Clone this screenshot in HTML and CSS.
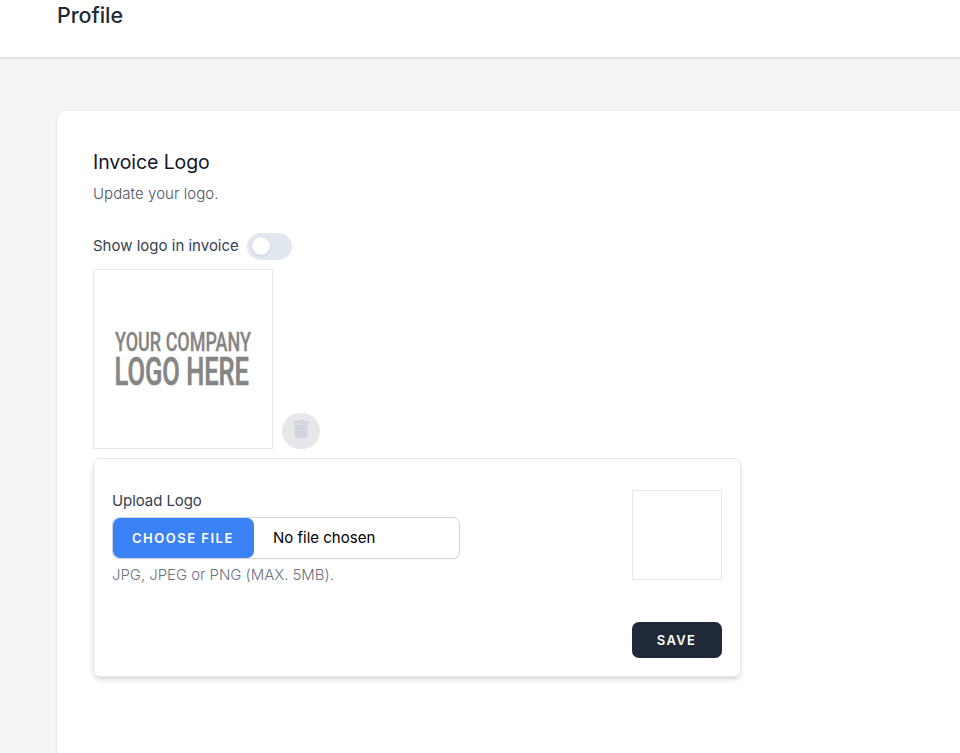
FILE: index.html
```html
<!DOCTYPE html>
<html lang="en">
<head>
<meta charset="utf-8">
<title>Profile</title>
<link rel="stylesheet" href="styles.css">
</head>
<body>
<header class="header"><h1 class="page-title"><span>Profile</span></h1></header>
<main class="panel">
  <h2 class="title"><span>Invoice Logo</span></h2>
  <p class="subtitle"><span>Update your logo.</span></p>
  <div class="toggle-row">
    <span class="toggle-label">Show logo in invoice</span>
    <span class="switch" role="switch" aria-checked="false"><span class="knob"></span></span>
  </div>
  <div class="logo-row">
    <div class="logo-box">
      <svg width="178" height="178" viewBox="94 270 178 178">
        <g class="logo-text">
          <text class="logo-small" x="115" y="351" textLength="136" lengthAdjust="spacingAndGlyphs">YOUR COMPANY</text>
          <text class="logo-large" x="114.5" y="384.5" textLength="134.5" lengthAdjust="spacingAndGlyphs">LOGO HERE</text>
        </g>
      </svg>
    </div>
    <button class="delete" aria-label="Delete logo">
      <svg width="16" height="18" viewBox="0 0 16 18"><path d="M0 1.7Q0 1 .8 1H4.8L5.7 0H10.3L11.2 1H15.2Q16 1 16 1.7V3Q16 3.7 15.2 3.7H.8Q0 3.7 0 3ZM1.2 4.6H14.8L14.1 17Q14 18 13 18H3Q2 18 1.9 17Z"/></svg>
    </button>
  </div>
  <section class="card">
    <div class="upload">
      <div class="upload-label"><span>Upload Logo</span></div>
      <div class="file"><span class="choose"><span>CHOOSE FILE</span></span><span class="chosen">No file chosen</span></div>
      <p class="hint"><span>JPG, JPEG or PNG (MAX. 5MB).</span></p>
    </div>
    <div class="side">
      <div class="preview"></div>
      <button class="save"><span>SAVE</span></button>
    </div>
  </section>
</main>
</body>
</html>
```
FILE: styles.css
```css
* { box-sizing: border-box; margin: 0; padding: 0; }
body {
  display: flex;
  flex-direction: column;
  height: 753px;
  overflow: hidden;
  background: #f3f4f6;
  font-family: Inter, "Liberation Sans", sans-serif;
  font-size: 15px;
  color: #374151;
}
button { border: 0; font: inherit; }
.header {
  flex: none;
  height: 57px;
  padding: 1px 57px 0;
  background: #fff;
  box-shadow: 0 1px 3px rgba(0,0,0,.1), 0 1px 2px rgba(0,0,0,.06);
}
.page-title { font-size: 21.5px; line-height: 28px; font-weight: 500; color: #1f2937; letter-spacing: -.05px; }
.panel {
  flex: 1;
  margin: 54px 0 0 57px;
  padding: 36px;
  background: #fff;
  border-radius: 9px 0 0 0;
  box-shadow: 0 1px 3px rgba(0,0,0,.1), 0 1px 2px rgba(0,0,0,.06);
}
.title { height: 31px; line-height: 30px; font-size: 19.5px; font-weight: 400; color: #111827; letter-spacing: -.1px; }
.subtitle { height: 33px; margin-top: 4px; line-height: 23px; font-weight: 300; color: #4b5563; letter-spacing: .06px; }
.toggle-row { display: flex; align-items: center; height: 27px; margin-top: 18px; }
.toggle-label { width: 154px; padding-bottom: 2px; white-space: nowrap; }
.switch { width: 45px; height: 27px; padding: 4px 5px; border-radius: 14px; background: #e2e8f0; }
.knob { display: block; width: 18px; height: 18px; border-radius: 50%; background: #fff; box-shadow: 0 1px 3px rgba(0,0,0,.12); }
.logo-row { display: flex; align-items: flex-end; gap: 9px; margin-top: 9px; }
.logo-box { width: 180px; height: 180px; border: 1px solid #e5e7eb; }
.logo-box svg { display: block; }
.logo-text { font-family: Roboto, sans-serif; fill: #858585; stroke: #858585; }
.logo-small { font-size: 26px; font-weight: 500; stroke-width: .3px; }
.logo-large { font-size: 38.5px; font-weight: 500; stroke-width: .7px; }
.delete { display: flex; justify-content: center; width: 38px; height: 36px; padding-top: 7px; border-radius: 18px; background: #e5e7eb; }
.delete svg { fill: #d1d5db; }
.card {
  display: flex;
  justify-content: space-between;
  width: 648px;
  height: 219px;
  margin-top: 9px;
  padding: 31px 18px 18px;
  border: 1px solid #e5e7eb;
  border-radius: 7px;
  box-shadow: 0 4px 6px -1px rgba(0,0,0,.1), 0 2px 4px -1px rgba(0,0,0,.1);
}
.upload { width: 348px; }
.upload-label { height: 27px; line-height: 21px; letter-spacing: -.08px; }
.file { display: flex; align-items: center; height: 42px; border: 1px solid #d1d5db; border-radius: 7px; box-shadow: 0 1px 2px rgba(0,0,0,.05); color: #000; }
.choose { display: flex; align-items: center; width: 141px; height: 40px; padding-left: 19px; border-radius: 7px; background: #3b82f6; color: #fff; font-size: 13px; font-weight: 600; letter-spacing: 1.5px; }
.chosen { margin-left: 19px; padding-bottom: 2px; }
.hint { margin-top: 4px; line-height: 23px; font-weight: 300; color: #6b7280; letter-spacing: -.05px; }
.side { display: flex; flex-direction: column; justify-content: space-between; }
.preview { width: 90px; height: 90px; border: 1px solid #e5e7eb; }
.save { width: 90px; height: 36px; padding-right: 1px; border-radius: 7px; background: #1f2937; color: #fff; font-size: 13px; font-weight: 600; letter-spacing: 1.3px; }
```
